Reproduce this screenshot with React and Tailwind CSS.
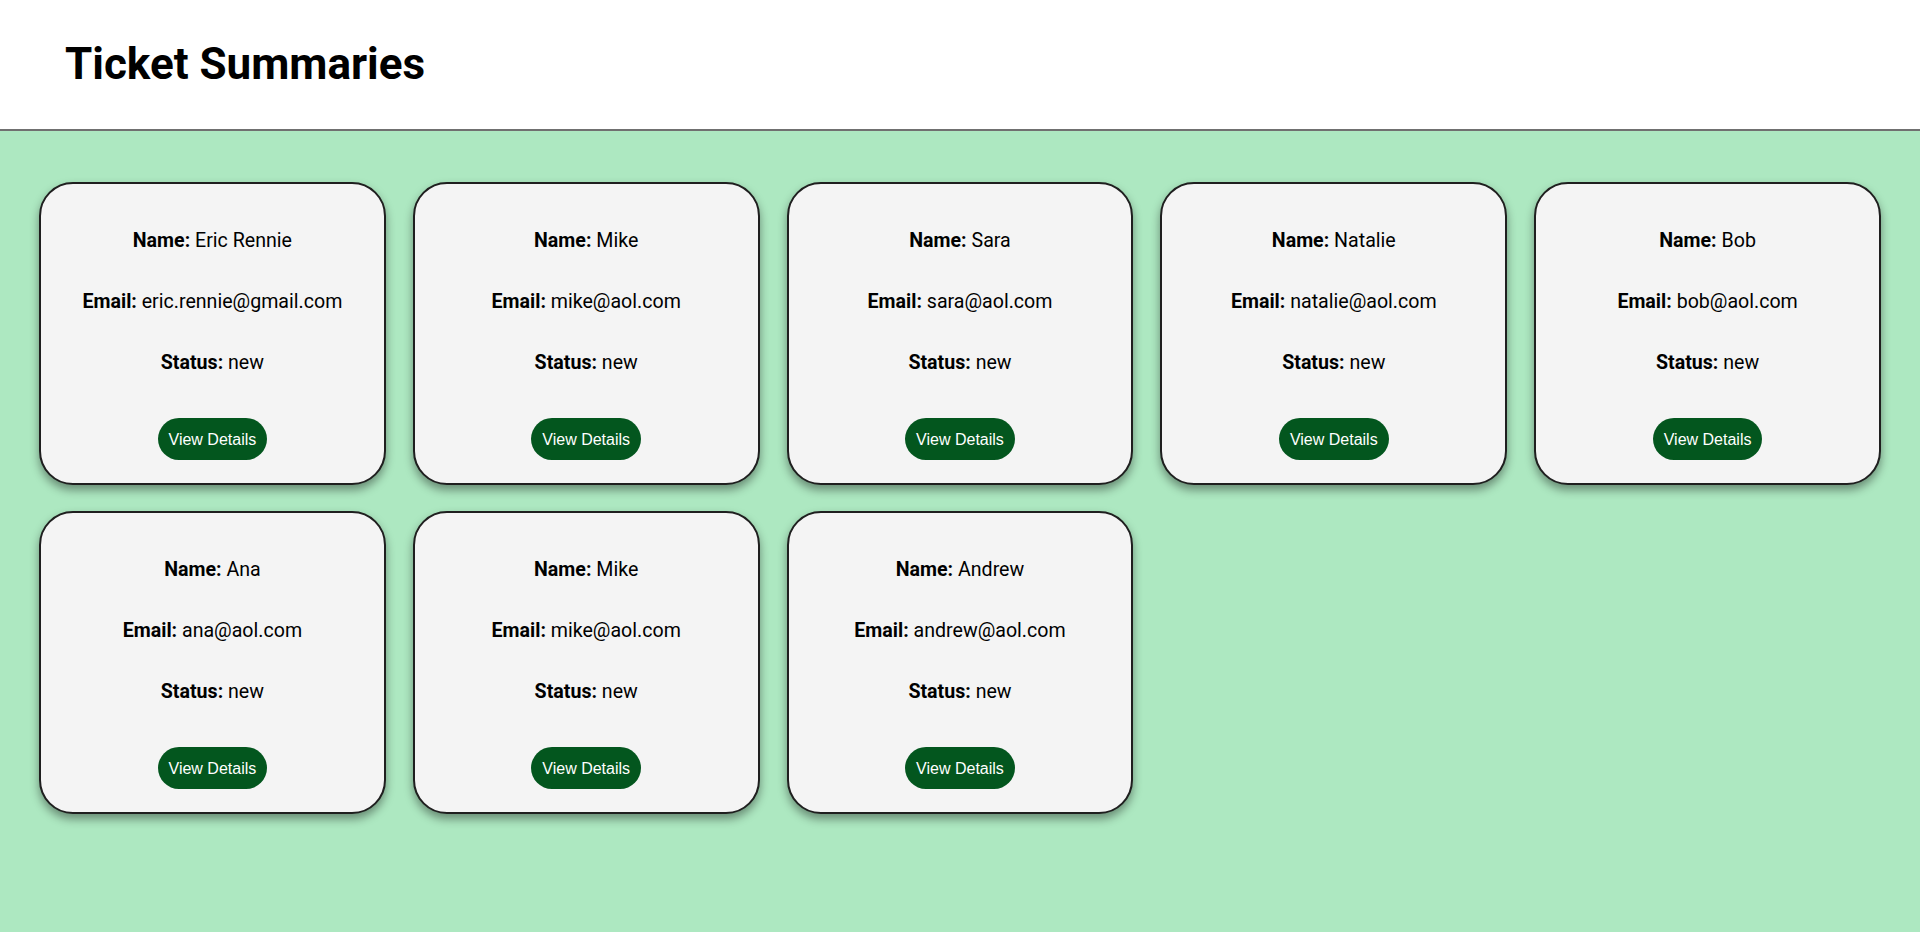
import React from "react";

const tickets = [
  { name: "Eric Rennie", email: "eric.rennie@gmail.com", status: "new" },
  { name: "Mike", email: "mike@aol.com", status: "new" },
  { name: "Sara", email: "sara@aol.com", status: "new" },
  { name: "Natalie", email: "natalie@aol.com", status: "new" },
  { name: "Bob", email: "bob@aol.com", status: "new" },
  { name: "Ana", email: "ana@aol.com", status: "new" },
  { name: "Mike", email: "mike@aol.com", status: "new" },
  { name: "Andrew", email: "andrew@aol.com", status: "new" },
];

const TicketCard = ({ ticket }) => {
  return (
    <div className="flex flex-col items-center bg-[#f4f4f4] border-2 border-[#1f1f1f] rounded-[34px] pt-[45px] pb-[23px] shadow-[0_5px_10px_rgba(0,0,0,0.4)] text-[19.6px] leading-[23px] text-black">
      <div className="flex flex-col items-center gap-[38px]">
        <p>
          <span className="font-bold">Name:</span> {ticket.name}
        </p>
        <p>
          <span className="font-bold">Email:</span> {ticket.email}
        </p>
        <p>
          <span className="font-bold">Status:</span> {ticket.status}
        </p>
      </div>
      <button className="mt-[44px] h-[42px] px-[11px] rounded-full bg-[#03561e] text-white text-[16px] font-['Liberation_Sans','Arial',sans-serif]">
        View Details
      </button>
    </div>
  );
};

const App = () => {
  return (
    <div className="min-h-screen flex flex-col bg-[#ade8c1] font-['Roboto','Liberation_Sans',sans-serif]">
      <header className="bg-white h-[131px] border-b-2 border-[#707070] flex items-center px-[65px]">
        <h1 className="text-[44px] font-bold leading-none text-black pb-[2px]">
          Ticket Summaries
        </h1>
      </header>
      <main className="flex-1 grid grid-cols-5 content-start gap-x-[27px] gap-y-[26px] px-[39px] pt-[51px] pb-10">
        {tickets.map((t, i) => (
          <TicketCard key={i} ticket={t} />
        ))}
      </main>
    </div>
  );
};

export default App;
